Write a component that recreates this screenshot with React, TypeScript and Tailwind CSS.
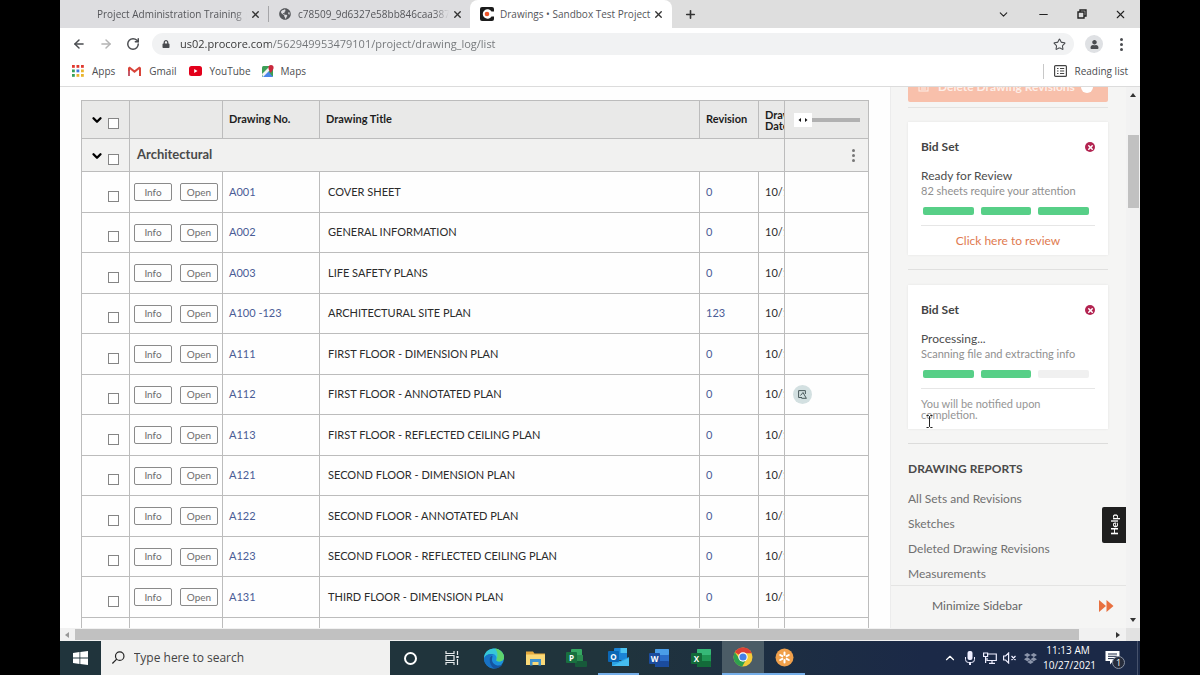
import React, { useState } from "react";
import {
  LuArrowLeft,
  LuArrowRight,
  LuChevronDown,
  LuChevronUp,
  LuMinus,
  LuPlus,
  LuRotateCw,
  LuStar,
  LuX,
} from "react-icons/lu";
import { FaDropbox, FaGlobeAmericas, FaLock, FaUser } from "react-icons/fa";

const drawings = [
  { no: "A001", title: "COVER SHEET", rev: "0" },
  { no: "A002", title: "GENERAL INFORMATION", rev: "0" },
  { no: "A003", title: "LIFE SAFETY PLANS", rev: "0" },
  { no: "A100 -123", title: "ARCHITECTURAL SITE PLAN", rev: "123" },
  { no: "A111", title: "FIRST FLOOR - DIMENSION PLAN", rev: "0" },
  { no: "A112", title: "FIRST FLOOR - ANNOTATED PLAN", rev: "0", sketch: true },
  { no: "A113", title: "FIRST FLOOR - REFLECTED CEILING PLAN", rev: "0" },
  { no: "A121", title: "SECOND FLOOR - DIMENSION PLAN", rev: "0" },
  { no: "A122", title: "SECOND FLOOR - ANNOTATED PLAN", rev: "0" },
  { no: "A123", title: "SECOND FLOOR - REFLECTED CEILING PLAN", rev: "0" },
  { no: "A131", title: "THIRD FLOOR - DIMENSION PLAN", rev: "0" },
];

const reports = ["All Sets and Revisions", "Sketches", "Deleted Drawing Revisions", "Measurements"];

//browser tabs and window buttons
function TabStrip() {
  return (
    <div className="flex h-7 shrink-0 items-center bg-[#dedede] text-[10px] text-[#55565a]">
      <div className="flex h-full w-[208px] items-center bg-[#dddde0] pl-[37px]">
        <span className="w-[150px] overflow-hidden whitespace-nowrap [mask-image:linear-gradient(90deg,#000_92%,transparent)]">
          Project Administration Training |
        </span>
        <button aria-label="Close tab" className="ml-[3px] text-[#333]">
          <LuX size={11} strokeWidth={3} />
        </button>
      </div>
      <div className="h-4 w-px bg-[#a5a5a8]" />
      <div className="flex h-full w-[201px] items-center bg-[#dddde0] pl-[10px]">
        <FaGlobeAmericas size={12} className="shrink-0 text-[#55575b]" />
        <span className="ml-[7px] w-[151px] overflow-hidden whitespace-nowrap [mask-image:linear-gradient(90deg,#000_90%,transparent)]">
          c78509_9d6327e58bb846caa387
        </span>
        <button aria-label="Close tab" className="ml-[3px] text-[#333]">
          <LuX size={11} strokeWidth={3} />
        </button>
      </div>
      <div className="flex h-full w-[202px] items-center rounded-t-lg bg-white pl-[10px]">
        <svg width="14" height="14" viewBox="0 0 14 14" className="shrink-0">
          <rect width="14" height="14" rx="2" fill="#1c1c1c" />
          <path d="M11.500 4.600A4.700 4.700 0 1 0 11.500 9.400H14V4.600z" fill="#fff" />
          <circle cx="7" cy="7" r="2.300" fill="#f0562b" />
        </svg>
        <span className="ml-[6px] w-[148px] whitespace-nowrap">Drawings • Sandbox Test Project</span>
        <button aria-label="Close tab" className="ml-[5px] text-[#333]">
          <LuX size={11} strokeWidth={3} />
        </button>
      </div>
      <button aria-label="New tab" className="ml-3 text-[#333]">
        <LuPlus size={13} strokeWidth={3} />
      </button>
      <div className="ml-auto flex h-full w-[156px] items-center justify-around text-[#222]">
        <button aria-label="Search tabs"><LuChevronDown size={13} /></button>
        <button aria-label="Minimize"><LuMinus size={13} /></button>
        <button aria-label="Restore">
          <svg width="10" height="10" viewBox="0 0 10 10" fill="none" stroke="currentColor" strokeWidth="1.4">
            <path d="M1 3h6v6H1zM3 3V1h6v6H7" />
          </svg>
        </button>
        <button aria-label="Close"><LuX size={13} /></button>
      </div>
    </div>
  );
}

function Toolbar() {
  const [url, setUrl] = useState("us02.procore.com/562949953479101/project/drawing_log/list");
  return (
    <div className="flex h-8 shrink-0 items-center bg-white pl-3 text-[#4a4c50]">
      <button aria-label="Back"><LuArrowLeft size={14} strokeWidth={2.5} /></button>
      <button aria-label="Forward" className="ml-[13px] text-[#b4b4b4]"><LuArrowRight size={14} strokeWidth={2.5} /></button>
      <button aria-label="Reload" className="ml-[13px]"><LuRotateCw size={14} strokeWidth={2.5} /></button>
      <div className="ml-3 flex h-[22px] flex-1 items-center rounded-full bg-[#f1f2f3] pl-[10px] pr-2">
        <FaLock size={8} />
        <input
          aria-label="Address"
          value={url}
          onChange={(e) => setUrl(e.target.value)}
          className="ml-[10px] flex-1 bg-[linear-gradient(90deg,#333_91px,#717477_91px)] bg-clip-text text-[11px] text-transparent outline-0"
        />
        <button aria-label="Bookmark this tab"><LuStar size={13} /></button>
      </div>
      <button aria-label="Profile" className="ml-[11px] flex size-[18px] items-center justify-center rounded-full bg-[#dfe1e4]">
        <FaUser size={9} />
      </button>
      <button aria-label="Menu" className="mx-[17px] flex flex-col gap-[2px]">
        <i className="size-[3px] rounded-full bg-current" />
        <i className="size-[3px] rounded-full bg-current" />
        <i className="size-[3px] rounded-full bg-current" />
      </button>
    </div>
  );
}

function Bookmarks() {
  const dots = ["#e0392f", "#e0392f", "#e0392f", "#34a05a", "#3f78e0", "#e9b52d", "#34a05a", "#e9b52d", "#e9b52d"];
  return (
    <nav className="flex h-[27px] shrink-0 items-center border-b border-[#dcdcdc] bg-white px-3 pb-[4px] text-[10px] text-[#4c4d50]">
      <a href="#" className="flex items-center gap-2">
        <svg width="12" height="12" viewBox="0 0 12 12">
          {dots.map((c, i) => (
            <rect key={i} x={(i % 3) * 4.5} y={Math.floor(i / 3) * 4.5} width="2.8" height="2.8" fill={c} />
          ))}
        </svg>
        Apps
      </a>
      <a href="#" className="ml-[13px] flex items-center gap-2">
        <svg width="13" height="10" viewBox="0 0 13 10" fill="none" strokeWidth="2">
          <path d="M1 10V1.5M12 10V1.5" stroke="#d9453b" />
          <path d="M1 1.2L6.5 5.6L12 1.2" stroke="#d9453b" />
          <path d="M1 10V5" stroke="#c55a6a" />
        </svg>
        Gmail
      </a>
      <a href="#" className="ml-[13px] flex items-center gap-[7px]">
        <svg width="13" height="10" viewBox="0 0 13 10">
          <rect width="13" height="10" rx="2.5" fill="#e3001b" />
          <path d="M5.2 3v4l3.3-2z" fill="#fff" />
        </svg>
        YouTube
      </a>
      <a href="#" className="ml-[11px] flex items-center gap-[7px]">
        <svg width="12" height="12" viewBox="0 0 12 12">
          <rect y="1" width="11" height="11" rx="1.5" fill="#3c9f57" />
          <path d="M0 12L6 6l5 6z" fill="#4a86ea" />
          <path d="M0 9L7 2l2 2-8 8z" fill="#f4f4f4" />
          <path d="M9 8C7.500 5.500 6.400 4.500 6.400 2.700a2.600 2.600 0 0 1 5.200 0C11.600 4.500 10 5.500 9 8z" fill="#c9283c" />
        </svg>
        Maps
      </a>
      <a href="#" className="ml-auto flex items-center gap-[7px] border-l border-[#c8c8c8] pl-[10px]">
        <svg width="13" height="12" viewBox="0 0 13 12" fill="none" stroke="#444" strokeWidth="1.2">
          <rect x="0.600" y="0.600" width="11.800" height="10.800" rx="1" />
          <path d="M3 3.500h1.500M3 6h1.500M3 8.500h1.500M6 3.500h4.200M6 6h4.200M6 8.500h4.200" />
        </svg>
        Reading list
      </a>
    </nav>
  );
}

function Check({ label }: { label: string }) {
  return (
    <input
      type="checkbox"
      aria-label={label}
      className="mt-2 block size-[11px] appearance-none border border-[#858585] bg-white checked:bg-[#4a6aa5]"
    />
  );
}

function Chevron() {
  return (
    <button aria-label="Collapse" className="mt-px">
      <LuChevronDown size={14} strokeWidth={4} />
    </button>
  );
}

const cell = "border border-[#bcbcbc]";

function DrawingTable() {
  const [scroll, setScroll] = useState("0");
  return (
    <table className="w-full table-fixed border-collapse text-left text-[11px] text-[#2b2b2b]">
      <colgroup>
        <col className="w-[48px]" />
        <col className="w-[93px]" />
        <col className="w-[97px]" />
        <col />
        <col className="w-[59px]" />
        <col className="w-[26px]" />
        <col className="w-[84px]" />
      </colgroup>
      <thead>
        <tr className="h-[38px] bg-[#e9e9e8] text-[#1d1d1d]">
          <th className={cell}>
            <div className="flex items-center gap-1 pl-2 text-black">
              <Chevron />
              <Check label="Select all drawings" />
            </div>
          </th>
          <th className={cell}></th>
          <th className={`${cell} pl-[6px]`}>Drawing No.</th>
          <th className={`${cell} pl-[6px]`}>Drawing Title</th>
          <th className={`${cell} pl-[6px]`}>Revision</th>
          <th className={`${cell} overflow-hidden pl-[6px] leading-[11px]`}>
            Drawing
            <br />
            Date
          </th>
          <th className={cell}>
            <div className="relative ml-[9px] flex w-[66px] items-center">
              <input
                type="range"
                aria-label="Scroll columns"
                value={scroll}
                onChange={(e) => setScroll(e.target.value)}
                className="h-1 w-full appearance-none bg-[#b1b1b1] [&::-webkit-slider-thumb]:h-[14px] [&::-webkit-slider-thumb]:w-[18px] [&::-webkit-slider-thumb]:appearance-none [&::-webkit-slider-thumb]:bg-white"
              />
              <svg width="10" height="4" viewBox="0 0 10 4" className="pointer-events-none absolute left-1">
                <path d="M3 0v4L0.500 2zM7 0v4l2.500-2z" fill="#111" />
              </svg>
            </div>
          </th>
        </tr>
      </thead>
      <tbody>
        <tr className="h-[33px] bg-[#f1f1f0]">
          <td className={cell}>
            <div className="flex items-center gap-1 pl-2 text-black">
              <Chevron />
              <Check label="Select Architectural" />
            </div>
          </td>
          <td colSpan={5} className={`${cell} pl-[7px] text-[13px] font-bold text-[#4a4a4a]`}>
            Architectural
          </td>
          <td className={cell}>
            <button aria-label="Group menu" className="ml-[67px] flex flex-col gap-[2px]">
              <i className="size-[3px] rounded-full bg-[#777]" />
              <i className="size-[3px] rounded-full bg-[#777]" />
              <i className="size-[3px] rounded-full bg-[#777]" />
            </button>
          </td>
        </tr>
        {drawings.map((d) => (
          <tr key={d.no} className="bg-[#fefefe] odd:h-10 even:h-[41px]">
            <td className={`${cell} pl-[26px]`}>
              <Check label={`Select ${d.no}`} />
            </td>
            <td className={cell}>
              <div className="flex gap-2 pl-1 text-[10px] text-[#6d6d6d]">
                <button className="h-[18px] w-[38px] rounded-xs border border-[#8a8a8a]">Info</button>
                <button className="h-[18px] w-[38px] rounded-xs border border-[#8a8a8a]">Open</button>
              </div>
            </td>
            <td className={`${cell} pl-[6px]`}>
              <a href="#" className="text-[#4a5c96]">{d.no}</a>
            </td>
            <td className={`${cell} pl-2`}>{d.title}</td>
            <td className={`${cell} pl-[6px] text-[#4a5c96]`}>{d.rev}</td>
            <td className={`${cell} overflow-hidden pl-[6px] whitespace-nowrap`}>10/1</td>
            <td className={cell}>
              {d.sketch && (
                <button aria-label="Sketches" className="ml-2 flex size-[19px] items-center justify-center rounded-full bg-[#d3e0e1]">
                  <svg width="9" height="9" viewBox="0 0 9 9" fill="none" stroke="#4a5a5c" strokeWidth="1">
                    <path d="M4 7.500H0.600V0.600H7.400V4" />
                    <path d="M2.500 5.500L5 2.500L8.300 8.300M3.500 8.300h5" />
                  </svg>
                </button>
              )}
            </td>
          </tr>
        ))}
        <tr className="h-10">
          <td className={cell}></td>
          <td className={cell}></td>
          <td className={cell}></td>
          <td className={cell}></td>
          <td className={cell}></td>
          <td className={cell}></td>
          <td className={cell}></td>
        </tr>
      </tbody>
    </table>
  );
}

type BidSetProps = { status: string; detail: string; done: number; children: React.ReactNode };

function BidSet({ status, detail, done, children }: BidSetProps) {
  return (
    <section className="bg-white px-[13px] pt-4 pb-[6px] shadow-[0_0_2px_#e4e4e4]">
      <div className="flex items-center justify-between">
        <h3 className="text-[12px] leading-[18px] font-bold text-[#444]">Bid Set</h3>
        <button aria-label="Remove" className="flex size-[10px] items-center justify-center rounded-full bg-[#b32451] text-white">
          <LuX size={7} strokeWidth={5} />
        </button>
      </div>
      <p className="mt-3 text-[12px] leading-4 text-[#4d4d4d]">{status}</p>
      <p className="text-[11px] leading-[14px] text-[#8f8f8f]">{detail}</p>
      <div className="mt-[9px] flex gap-[7px] border-b border-[#e6e6e6] pr-[6px] pb-[10px] pl-[2px]">
        {[0, 1, 2].map((n) => (
          <div key={n} className={`h-2 flex-1 rounded-xs ${n < done ? "bg-[#57cf87]" : "bg-[#f0f0f0]"}`} />
        ))}
      </div>
      {children}
    </section>
  );
}

function Sidebar() {
  return (
    <aside className="relative flex w-[236px] shrink-0 flex-col border-l border-[#ececec] bg-[#f5f5f4]">
      <div className="min-h-0 flex-1 overflow-hidden pr-[18px] pl-[17px]">
        <button className="-mt-4 flex h-[31px] w-full items-center rounded-xs bg-[#f8c0ab] pl-[10px] text-[12px] font-bold text-[#fdeee8]">
          <svg width="11" height="11" viewBox="0 0 11 11" fill="none" stroke="currentColor" className="mr-[9px]">
            <rect x="1" y="1" width="9" height="9" />
            <path d="M3 6h5M3 8h5" />
          </svg>
          Delete Drawing Revisions
          <i className="ml-[6px] size-3 rounded-full bg-white" />
        </button>
        <div className="mt-[5px] mb-[14px] h-px bg-[#e3e3e2]" />
        <BidSet status="Ready for Review" detail="82 sheets require your attention" done={3}>
          <a href="#" className="mt-[7px] block text-center text-[12px] leading-4 text-[#e07a50]">Click here to review</a>
        </BidSet>
        <div className="mt-[14px] mb-[15px] h-px bg-[#e0e0df]" />
        <BidSet status="Processing..." detail="Scanning file and extracting info" done={2}>
          <p className="mt-[9px] w-[140px] pb-[3px] text-[11px] leading-[11px] text-[#959595]">You will be notified upon completion.</p>
        </BidSet>
        <div className="mt-[14px] mb-4 h-px bg-[#dcdcdb]" />
        <h2 className="text-[12px] leading-[18px] font-bold text-[#4a4a4a]">DRAWING REPORTS</h2>
        <ul className="mt-2 text-[12px] leading-[25px] text-[#707070]">
          {reports.map((r) => (
            <li key={r}>
              <a href="#">{r}</a>
            </li>
          ))}
        </ul>
      </div>
      <button className="flex h-[43px] shrink-0 items-center justify-between border-t border-[#e4e4e3] pr-3 pb-[2px] pl-[41px] text-[12px] text-[#666]">
        Minimize Sidebar
        <svg width="15" height="12" viewBox="0 0 15 12" fill="#e8703f">
          <path d="M0 0l7 6-7 6zM7.500 0l7 6-7 6z" />
        </svg>
      </button>
      <button className="absolute right-0 bottom-[85px] flex h-[36px] w-6 items-center justify-center rounded-l-xs bg-[#1f1f1f] text-white">
        <span className="rotate-180 text-[10px] font-bold [writing-mode:vertical-rl]">Help</span>
      </button>
      <svg width="7" height="13" viewBox="0 0 7 13" fill="none" stroke="#222" className="pointer-events-none absolute top-[328px] left-[35px]">
        <path d="M0.500 0.500h2l1 1 1-1h2M3.500 1.500v10M0.500 12.500h2l1-1 1 1h2" />
      </svg>
    </aside>
  );
}

function OfficeIcon({ letter, dark, mid, light }: { letter: string; dark: string; mid: string; light: string }) {
  return (
    <svg width="21" height="20" viewBox="0 0 21 20">
      <rect x="6" y="1" width="14" height="18" rx="1" fill={mid} />
      <rect x="6" y="1" width="14" height="6" rx="1" fill={light} />
      <rect x="6" y="13" width="14" height="6" rx="1" fill={dark} />
      <rect y="5" width="11" height="11" rx="1" fill={dark} />
      <text x="5.500" y="13.500" fontSize="8" fontWeight="700" fill="#fff" textAnchor="middle">{letter}</text>
    </svg>
  );
}

function Taskbar() {
  const item = "flex items-center justify-center";
  return (
    <footer className="flex h-[34px] shrink-0 items-center bg-linear-to-r from-[#20343c] from-50% to-[#1b2947] to-80% text-white">
      <button aria-label="Start" className="flex h-full w-[41px] items-center justify-center">
        <svg width="15" height="14" viewBox="0 0 15 14" fill="#fff">
          <path d="M0 2l6.500-1v5.600H0zM7.300 0.900L15 0v6.600H7.300zM0 7.400h6.500V13L0 12zM7.300 7.400H15V14l-7.700-1z" />
        </svg>
      </button>
      <label className="flex h-full w-[289px] items-center gap-2 bg-[#f1f1f0] pl-[10px]">
        <svg width="16" height="16" viewBox="0 0 16 16" fill="none" stroke="#222" strokeWidth="1.300">
          <circle cx="9.500" cy="6" r="4.600" />
          <path d="M6.200 9.300L1.500 14" />
        </svg>
        <input aria-label="Search" placeholder="Type here to search" className="w-full text-[12px] text-[#333] outline-0 placeholder:text-[#444]" />
      </label>
      <div className="grid h-full w-[415px] grid-cols-10">
        <button aria-label="Cortana" className={item}><i className="size-[13px] rounded-full border-2 border-white" /></button>
        <button aria-label="Task View" className={item}>
          <svg width="15" height="14" viewBox="0 0 15 14" fill="none" stroke="#e6eaec" strokeWidth="1.200">
            <path d="M1 0v2.500h8V0M1 14v-2.500h8V14M1 4.500h8v5H1zM12.500 0v4M12.500 8v6" />
            <path d="M11.300 6h2.400" strokeWidth="2" />
          </svg>
        </button>
        <button aria-label="Edge" className={item}>
          <svg width="22" height="21" viewBox="0 0 22 21">
            <circle cx="11" cy="10.500" r="10" fill="#1c8fdb" />
            <path d="M1 10.500C1 4 6 0.500 11 0.500c6 0 10 4.500 10 8.500 0 3-2.500 4.500-5 4.500-2 0-3-1-2.500-2C14 8 12 6 9 6 5 6 2 7.500 1 10.500z" fill="#36c7d8" />
            <path d="M12 0.600c5 0.500 9 4.400 9 8.600 0 3-2.500 4.300-5 4.300-2 0-3-1-2.500-2C15 8 15 4 12 0.600z" fill="#5fd46c" />
            <path d="M6.500 11.500c0-2.500 1.500-4.500 4-5-4-1.500-8.500 0.500-9.500 4 0 5.500 4.500 10 10 10C8.500 18.500 6.500 15 6.500 11.500z" fill="#1872c4" />
            <path d="M9 11.500c0 3.500 3 6 6.500 6 1.500 0 2.800-0.400 4-1-2 3-5 4.200-8.500 4-3-2-4.500-5.500-4.500-9 0-1 0.500-3 2.500-4C10 8 9 9.500 9 11.500z" fill="#1554a0" />
          </svg>
        </button>
        <button aria-label="File Explorer" className={item}>
          <svg width="19" height="16" viewBox="0 0 19 16">
            <path d="M0 1.500h7l1.500 2H19V15H0z" fill="#e5a93d" />
            <path d="M0 4.500h19V15H0z" fill="#f9d978" />
            <path d="M4 9h11v6.500h-2.500V12h-6v3.500H4z" fill="#3f93cf" />
          </svg>
        </button>
        <button aria-label="Project" className={item}>
          <svg width="21" height="20" viewBox="0 0 21 20">
            <rect x="5" y="1" width="11" height="8" rx="1" fill="#35a862" />
            <rect x="9" y="7" width="8" height="6" fill="#2a8a4f" />
            <rect x="9" y="13" width="12" height="6" rx="1" fill="#17593a" />
            <rect y="4" width="11" height="11" rx="1" fill="#18703f" />
            <text x="5.500" y="12.500" fontSize="8" fontWeight="700" fill="#fff" textAnchor="middle">P</text>
          </svg>
        </button>
        <button aria-label="Outlook" className={`${item} border-b-2 border-[#75aee8]`}>
          <svg width="21" height="20" viewBox="0 0 21 20">
            <rect x="6" y="1" width="13" height="12" rx="1" fill="#1b84d6" />
            <rect x="12.500" y="1" width="6.500" height="5" fill="#4cc3f1" />
            <path d="M4 10l8 4 9-4v9H4z" fill="#2ba2e4" />
            <path d="M4 19l17-8v8z" fill="#45bdf0" />
            <rect y="4" width="11" height="11" rx="1" fill="#0b67b5" />
            <text x="5.500" y="12.500" fontSize="8" fontWeight="700" fill="#fff" textAnchor="middle">O</text>
          </svg>
        </button>
        <button aria-label="Word" className={item}><OfficeIcon letter="W" dark="#1b4c9e" mid="#2a6cc8" light="#4a9de8" /></button>
        <button aria-label="Excel" className={item}><OfficeIcon letter="X" dark="#136b3a" mid="#1f9553" light="#36b877" /></button>
        <button aria-label="Chrome" className={`${item} border-b-2 border-[#75aee8] bg-[#4b5c66]`}>
          <svg width="20" height="20" viewBox="0 0 20 20">
            <circle cx="10" cy="10" r="9.500" fill="#f5cb3a" />
            <path d="M10 10L1.800 5.200A9.500 9.500 0 0 1 18.800 6.200H10z" fill="#dc3f35" />
            <path d="M10 10L6.500 12 1.800 5.200A9.500 9.500 0 0 0 9.200 19.500L13.500 12z" fill="#2fa04f" />
            <circle cx="10" cy="10" r="4.700" fill="#fff" />
            <circle cx="10" cy="10" r="3.600" fill="#4480e8" />
          </svg>
        </button>
        <button aria-label="GoToMeeting" className={`${item} border-b-2 border-[#75aee8]`}>
          <svg width="19" height="19" viewBox="0 0 19 19">
            <circle cx="9.500" cy="9.500" r="9" fill="#f0a04b" />
            <g stroke="#fff" strokeWidth="2" strokeLinecap="round">
              <path d="M9.500 4.500v2.500M9.500 12v2.500M5.200 7l2.100 1.200M11.700 10.800l2.100 1.200M13.800 7l-2.100 1.200M7.300 10.800l-2.100 1.200" />
            </g>
          </svg>
        </button>
      </div>
      <div className="ml-auto flex h-full items-center pr-[2px]">
        <LuChevronUp size={14} />
        <svg width="10" height="14" viewBox="0 0 10 14" fill="#eef" className="ml-2">
          <rect x="2.500" width="5" height="9" rx="2" />
          <path d="M0.500 6v2.500a3 3 0 0 0 3 3h3a3 3 0 0 0 3-3V6" fill="none" stroke="#eef" />
          <path d="M4 11h2v3H4z" />
        </svg>
        <svg width="14" height="12" viewBox="0 0 14 12" fill="none" stroke="#eef" strokeWidth="1.200" className="ml-2">
          <path d="M5 2h8.300v6.500H4V6M6 11.300h6M9 8.500v2.800" />
          <path d="M0.600 1h4v3.500h-4zM2.600 4.500V11" />
        </svg>
        <svg width="13" height="12" viewBox="0 0 13 12" fill="none" stroke="#eef" strokeWidth="1.200" className="ml-[6px]">
          <path d="M0.600 4h2l3-3v10l-3-3h-2zM8.500 4l4 4M12.500 4l-4 4" />
        </svg>
        <FaDropbox size={13} className="ml-2 text-[#8b95aa]" />
        <div className="ml-[6px] w-[50px] text-center text-[10px] leading-[15px] whitespace-nowrap">
          11:13 AM
          <br />
          10/27/2021
        </div>
        <button aria-label="Notifications" className="relative mr-4 ml-3">
          <svg width="16" height="16" viewBox="0 0 16 16">
            <path d="M0.500 1h14v10H8l-3 3.500V11H0.500z" fill="#fff" />
            <path d="M3 4h9M3 6.300h9M3 8.600h6" stroke="#1b2947" />
          </svg>
          <span className="absolute top-[6px] left-[7px] flex size-[13px] items-center justify-center rounded-full border border-[#8a93a5] bg-[#262c3b] text-[9px]">1</span>
        </button>
        <div className="h-full w-px bg-[#46526c]" />
      </div>
    </footer>
  );
}

export default function App() {
  return (
    <div className="flex h-screen flex-col bg-black px-[60px] font-['Open_Sans',sans-serif]">
      <TabStrip />
      <Toolbar />
      <Bookmarks />
      <div className="flex min-h-0 flex-1 bg-[#fefefe] font-[Lato,sans-serif]">
        <main className="min-w-0 flex-1 overflow-hidden pt-[13px] pr-[21px] pl-[21px]">
          <DrawingTable />
        </main>
        <Sidebar />
        <div className="flex w-[14px] shrink-0 flex-col items-center bg-[#f2f2f2] py-[6px]">
          <svg width="6" height="4" viewBox="0 0 6 4"><path d="M3 0l3 4H0z" fill="#333" /></svg>
          <div className="mt-[38px] h-[73px] w-[11px] bg-[#c1c1c1]" />
          <svg width="6" height="4" viewBox="0 0 6 4" className="mt-auto"><path d="M0 0h6L3 4z" fill="#333" /></svg>
        </div>
      </div>
      <div className="flex h-[13px] shrink-0 items-center bg-[#f1f1f1] pl-[5px]">
        <svg width="4" height="6" viewBox="0 0 4 6"><path d="M4 0v6L0 3z" fill="#999" /></svg>
        <div className="mr-[37px] ml-[6px] h-[11px] flex-1 bg-[#c1c1c1]" />
        <svg width="4" height="6" viewBox="0 0 4 6"><path d="M0 0v6l4-3z" fill="#333" /></svg>
        <div className="ml-[6px] h-full w-[14px] bg-[#e2e2e2]" />
      </div>
      <Taskbar />
    </div>
  );
}
